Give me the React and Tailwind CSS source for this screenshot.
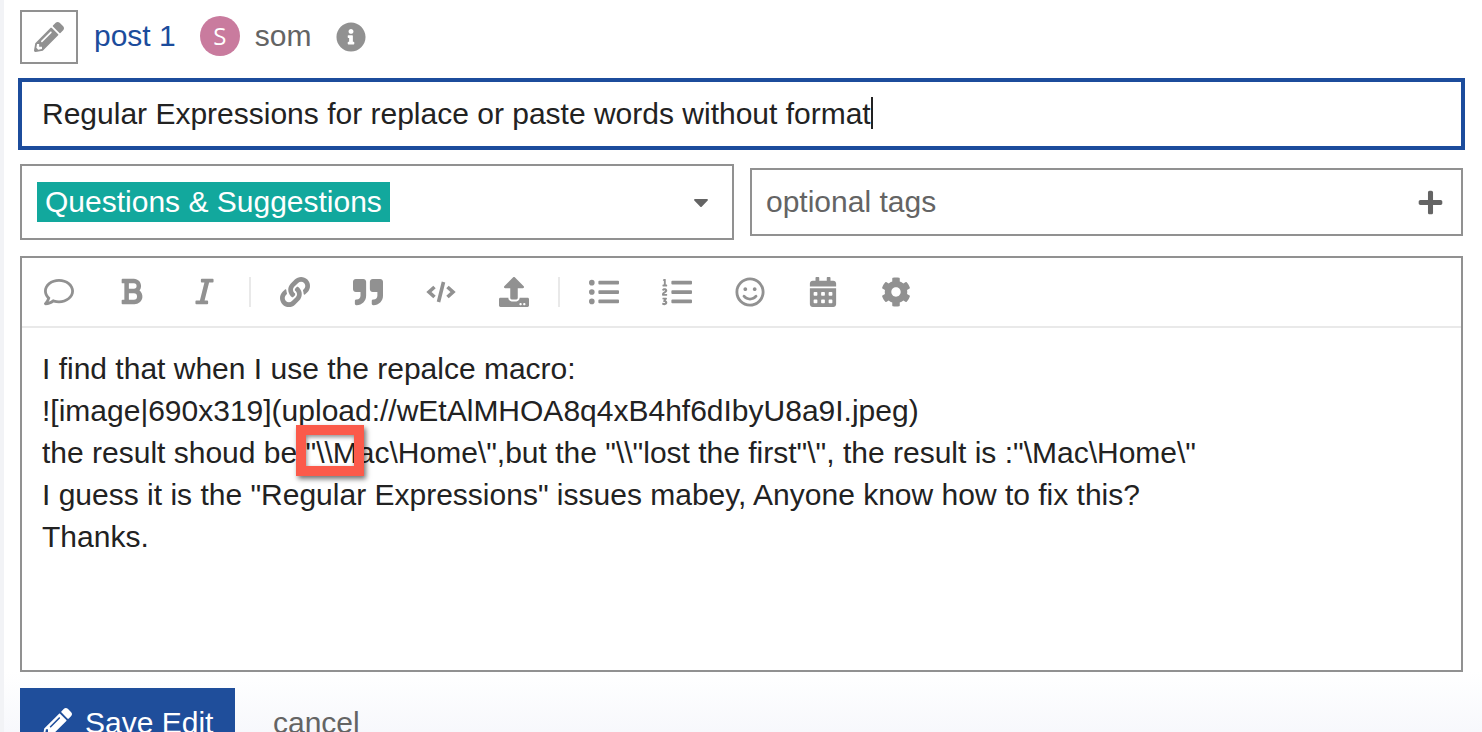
import {
  FaBold,
  FaCalendarAlt,
  FaCaretDown,
  FaCog,
  FaInfoCircle,
  FaItalic,
  FaLink,
  FaListOl,
  FaListUl,
  FaPencilAlt,
  FaPlus,
  FaQuoteRight,
  FaRegComment,
  FaRegSmile,
  FaUpload,
} from 'react-icons/fa';

const FONT = "font-['Liberation_Sans',Arial,sans-serif]";

const CodeIcon = ({ className }) => (
  <svg viewBox="0 0 30 30" className={className} fill="none" stroke="currentColor" strokeWidth="3.6">
    <path d="M8.5 10 L3 15 L8.5 20" />
    <path d="M21.5 10 L27 15 L21.5 20" />
    <path d="M17.5 5 L12.5 25" />
  </svg>
);

const TOOLBAR = [
  [
    { key: 'comment', Icon: FaRegComment },
    { key: 'bold', Icon: FaBold, size: 'w-[25px] h-[29px]' },
    { key: 'italic', Icon: FaItalic, size: 'w-[25px] h-[29px]' },
  ],
  [
    { key: 'link', Icon: FaLink },
    { key: 'quote', Icon: FaQuoteRight },
    { key: 'code', Icon: CodeIcon },
    { key: 'upload', Icon: FaUpload },
  ],
  [
    { key: 'ul', Icon: FaListUl },
    { key: 'ol', Icon: FaListOl },
    { key: 'smile', Icon: FaRegSmile },
    { key: 'calendar', Icon: FaCalendarAlt },
    { key: 'cog', Icon: FaCog },
  ],
];

const LINES = [
  'I find that when I use the repalce macro:',
  '![image|690x319](upload://wEtAlMHOA8q4xB4hf6dIbyU8a9I.jpeg)',
  'the result shoud be "\\\\Mac\\Home\\",but the "\\\\"lost the first"\\", the result is :"\\Mac\\Home\\"',
  'I guess it is the "Regular Expressions" issues mabey, Anyone know how to fix this?',
  'Thanks.',
];

const Toolbar = () => (
  <div className="flex items-center h-[70px] pb-[1px] border-b-2 border-[#e9e9e9]">
    {TOOLBAR.map((group, index) => (
      <div key={group[0].key} className="flex items-center">
        {index > 0 && <span className="w-[2px] h-[30px] bg-[#e9e9e9] mx-[7.5px]" />}
        {group.map(({ key, Icon, size }) => (
          <span key={key} className="w-[73px] flex justify-center text-[#919191]">
            <Icon className={size || 'w-[30px] h-[30px]'} />
          </span>
        ))}
      </div>
    ))}
  </div>
);

const App = () => (
  <div className={`${FONT} relative h-[732px] overflow-hidden bg-white border-l-4 border-[#f2f3f6]`}>
    <div className="pl-[14px] w-[1465px]">
      <div className="flex items-center h-[78px] pl-[2px] pb-[4px]">
        <span className="w-[58px] h-[54px] border-2 border-[#919191] flex items-center justify-center text-[#919191]">
          <FaPencilAlt className="w-[30px] h-[30px]" />
        </span>
        <span className="ml-[16px] mb-[4px] text-[30px] text-[#1c4c9c]">post 1</span>
        <span className="ml-[24px] mb-[2px] w-[40px] h-[40px] rounded-full bg-[#c97b9e] text-white text-[24px] flex items-center justify-center font-['Open_Sans',sans-serif]">
          S
        </span>
        <span className="ml-[15px] mb-[4px] text-[30px] text-[#646464]">som</span>
        <FaInfoCircle className="ml-[25px] w-[30px] h-[30px] text-[#919191]" />
      </div>

      <div className="h-[72px] w-[1447px] border-4 border-[#1c4c9c] flex items-center pl-[20px] pb-[2px] text-[30px] text-[#222222]">
        <span>Regular Expressions for replace or paste words without format</span>
        <span className="w-[2px] h-[32px] bg-[#222222]" />
      </div>

      <div className="flex items-center mt-[14px] ml-[2px] h-[76px]">
        <div className="w-[714px] h-[76px] border-2 border-[#919191] flex items-center justify-between pl-[15px] pr-[19px]">
          <span className="bg-[#12a89d] text-white text-[30px] h-[40px] w-[353px] pl-[8px] pb-[2px] flex items-center">
            Questions &amp; Suggestions
          </span>
          <FaCaretDown className="w-[24px] h-[24px] text-[#646464]" />
        </div>
        <div className="ml-[16px] w-[713px] h-[68px] border-2 border-[#919191] flex items-center justify-between pl-[14px] pr-[17px] text-[30px] text-[#646464]">
          <span className="mb-[2px]">optional tags</span>
          <FaPlus className="w-[27px] h-[27px]" />
        </div>
      </div>

      <div className="ml-[2px] mt-[16px] w-[1443px] h-[416px] border-2 border-[#919191]">
        <Toolbar />
        <div className="pl-[20px] pt-[20px] text-[30px] leading-[42px] text-[#222222] whitespace-pre">
          {LINES.map((line) => (
            <div key={line}>{line}</div>
          ))}
        </div>
      </div>
    </div>

    {/* red annotation box drawn over the text */}
    <div className="absolute left-[292px] top-[425px] w-[68px] h-[51px] border-[10px] border-[#fb5a4a] shadow-[2px_3px_5px_rgba(0,0,0,0.55),inset_1px_2px_4px_rgba(0,0,0,0.45)]" />

    <div className="h-[60px] pl-[16px] pt-[16px] bg-gradient-to-b from-white to-[#f7f8fc] flex items-start">
      <span className="w-[215px] h-[70px] bg-[#1f4e9b] text-white text-[30px] flex items-center pl-[23px] pb-[2px]">
        <FaPencilAlt className="w-[29px] h-[29px] mr-[13px]" />
        Save Edit
      </span>
      <span className="ml-[38px] mt-[12px] text-[30px] text-[#646464]">cancel</span>
    </div>
  </div>
);

export default App;
